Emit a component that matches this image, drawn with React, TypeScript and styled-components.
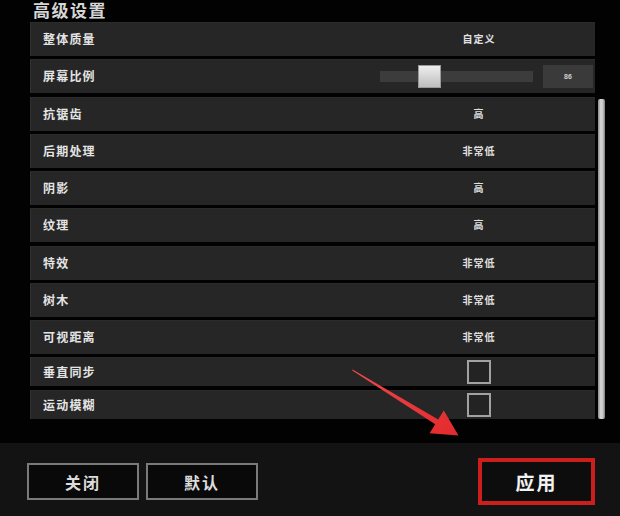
import React from 'react'
import styled, { createGlobalStyle } from 'styled-components'

type Setting =
  | { label: string; kind: 'text'; value: string }
  | { label: string; kind: 'slider'; value: number }
  | { label: string; kind: 'check'; checked: boolean }

const settings: Setting[] = [
  { label: '整体质量', kind: 'text', value: '自定义' },
  { label: '屏幕比例', kind: 'slider', value: 86 },
  { label: '抗锯齿', kind: 'text', value: '高' },
  { label: '后期处理', kind: 'text', value: '非常低' },
  { label: '阴影', kind: 'text', value: '高' },
  { label: '纹理', kind: 'text', value: '高' },
  { label: '特效', kind: 'text', value: '非常低' },
  { label: '树木', kind: 'text', value: '非常低' },
  { label: '可视距离', kind: 'text', value: '非常低' },
  { label: '垂直同步', kind: 'check', checked: false },
  { label: '运动模糊', kind: 'check', checked: false },
]

const App = () => {
  return (
    <>
      <GlobalStyle />
      <Page>
        <Top>
          <Title>高级设置</Title>
          <ListArea>
            <List>
              {settings.map((s) => (
                <Row key={s.label} $short={s.kind === 'check'}>
                  <Label>{s.label}</Label>
                  <ValueCell>
                    {s.kind === 'text' && <Value>{s.value}</Value>}
                    {s.kind === 'slider' && (
                      <SliderWrap>
                        <Track>
                          {/* thumb pos from value (50..150 scale) */}
                          <Thumb style={{ left: `${((s.value - 50) / 100) * 130 - 9}px` }} />
                        </Track>
                        <NumBox>{s.value}</NumBox>
                      </SliderWrap>
                    )}
                    {s.kind === 'check' && <CheckBox />}
                  </ValueCell>
                </Row>
              ))}
            </List>
            <ScrollThumb />
          </ListArea>
          <Arrow viewBox="0 0 620 516" width="620" height="516">
            <defs>
              <linearGradient id="ar" x1="0" y1="0" x2="1" y2="1">
                <stop offset="0" stopColor="#f0484a" />
                <stop offset="1" stopColor="#e22a2e" />
              </linearGradient>
            </defs>
            <polygon
              points="352.6,369.4 438.2,419.6 443.8,410.6 458.5,435.5 429.6,433.2 435.2,424.2 352.2,370.4"
              fill="url(#ar)"
            />
          </Arrow>
        </Top>
        <BottomBar>
          <Left>
            <GrayButton>关闭</GrayButton>
            <GrayButton>默认</GrayButton>
          </Left>
          <ApplyButton>应用</ApplyButton>
        </BottomBar>
      </Page>
    </>
  )
}

export default App

const GlobalStyle = createGlobalStyle`
  * { box-sizing: border-box; }
  body {
    margin: 0;
    background: #000;
    font-family: "Noto Sans CJK SC", "Noto Sans", sans-serif;
  }
`

const Page = styled.div`
  width: 620px;
  height: 516px;
  overflow: hidden;
  display: flex;
  flex-direction: column;
  background: #000;
`

const Top = styled.div`
  position: relative;
  height: 443px;
  padding-left: 30px;
  background: #020202;
`

const Title = styled.div`
  height: 19px;
  line-height: 19px;
  margin-bottom: 3px;
  padding-left: 3px;
  font-size: 17px;
  font-weight: 700;
  letter-spacing: 1.5px;
  color: #d6d6d6;
`

const ListArea = styled.div`
  display: flex;
  gap: 3px;
`

const List = styled.div`
  width: 565px;
  display: flex;
  flex-direction: column;
  gap: 3.25px;
`

const Row = styled.div<{ $short?: boolean }>`
  height: ${(p) => (p.$short ? 29 : 34)}px;
  margin-bottom: ${(p) => (p.$short ? 0.75 : 0)}px;
  display: grid;
  grid-template-columns: 332px 233px;
  align-items: center;
  background: #262626;
  border-left: 1px solid #303030;
  border-top: 1px solid #2b2b2b;
`

const Label = styled.div`
  padding-left: 12px;
  padding-bottom: 2px;
  font-size: 12px;
  font-weight: 700;
  letter-spacing: 1.2px;
  color: #e4e4e4;
`

const ValueCell = styled.div`
  display: flex;
  justify-content: center;
  align-items: center;
  padding-right: 1px;
`

const Value = styled.span`
  padding-bottom: 2px;
  font-size: 10px;
  font-weight: 700;
  letter-spacing: 1px;
  color: #e0e0e0;
`

const SliderWrap = styled.div`
  width: 100%;
  display: flex;
  align-items: center;
  padding-left: 17px;
  gap: 10px;
`

const Track = styled.div`
  position: relative;
  width: 153px;
  height: 11px;
  background: #3c3c3c;
`

const Thumb = styled.div`
  position: absolute;
  top: -6px;
  width: 23px;
  height: 23px;
  background: linear-gradient(#eeeeee, #bdbdbd);
  border: 1px solid #9a9a9a;
`

const NumBox = styled.div`
  width: 50px;
  height: 23px;
  display: flex;
  align-items: center;
  justify-content: center;
  background: #3a3a3a;
  color: #cfcfcf;
  font-size: 7px;
  font-weight: 700;
  font-family: "Liberation Sans", sans-serif;
`

const CheckBox = styled.div`
  width: 24px;
  height: 24px;
  border: 2px solid #a2a2a2;
  background: #232323;
`

const ScrollThumb = styled.div`
  margin-top: 77px;
  width: 7px;
  height: 320px;
  border-radius: 2px;
  background: linear-gradient(90deg, #8a8a8a, #d8d8d8 40%, #c4c4c4 70%, #7a7a7a);
`

const Arrow = styled.svg`
  position: absolute;
  left: 0;
  top: 0;
  pointer-events: none;
`

const BottomBar = styled.div`
  height: 73px;
  display: flex;
  align-items: center;
  justify-content: space-between;
  padding: 4px 25px 0 27px;
  background: #131313;
`

const Left = styled.div`
  display: flex;
  gap: 7px;
`

const GrayButton = styled.button`
  width: 112px;
  height: 37px;
  border: 2px solid #7a7a7a;
  background: #090909;
  color: #dcdcdc;
  font-family: inherit;
  font-size: 16px;
  font-weight: 700;
  letter-spacing: 2px;
  padding: 0;
`

const ApplyButton = styled.button`
  width: 117px;
  height: 47px;
  border: 4px solid #cc1f1c;
  background: #0d0d0d;
  color: #f2f2f2;
  font-family: inherit;
  font-size: 19px;
  font-weight: 700;
  letter-spacing: 2px;
  padding: 0;
`
